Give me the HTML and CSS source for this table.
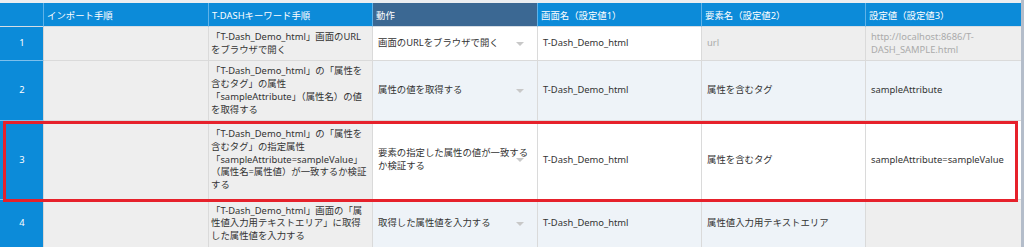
FILE: index.html
```html
<!DOCTYPE html>
<html lang="ja">
<head>
<meta charset="utf-8">
<title>T-DASH 手順</title>
<link rel="stylesheet" href="styles.css">
</head>
<body>
<div class="sheet">
  <table class="grid">
    <colgroup>
      <col class="c-num">
      <col class="c-import">
      <col class="c-kw">
      <col class="c-act">
      <col class="c-v1">
      <col class="c-v2">
      <col class="c-v3">
    </colgroup>
    <thead>
      <tr>
        <th class="num"></th>
        <th>インポート手順</th>
        <th>T-DASHキーワード手順</th>
        <th class="dark">動作</th>
        <th>画面名（設定値1）</th>
        <th>要素名（設定値2）</th>
        <th>設定値（設定値3）</th>
      </tr>
    </thead>
    <tbody>
      <tr class="r1">
        <td class="num">1</td>
        <td class="ro"></td>
        <td class="ro kw">「T-Dash_Demo_html」画面のURLをブラウザで開く</td>
        <td class="w sel">画面のURLをブラウザで開く</td>
        <td class="w">T-Dash_Demo_html</td>
        <td class="dis">url</td>
        <td class="dis">http://localhost:8686/T-DASH_SAMPLE.html</td>
      </tr>
      <tr class="r2">
        <td class="num">2</td>
        <td class="ro"></td>
        <td class="ro kw">「T-Dash_Demo_html」の「属性を含むタグ」の属性「sampleAttribute」（属性名）の値を取得する</td>
        <td class="b sel">属性の値を取得する</td>
        <td class="b">T-Dash_Demo_html</td>
        <td class="b">属性を含むタグ</td>
        <td class="b">sampleAttribute</td>
      </tr>
      <tr class="r3">
        <td class="num">3</td>
        <td class="ro"></td>
        <td class="ro kw">「T-Dash_Demo_html」の「属性を含むタグ」の指定属性「sampleAttribute=sampleValue」（属性名=属性値）が一致するか検証する</td>
        <td class="w sel">要素の指定した属性の値が一致するか検証する</td>
        <td class="w">T-Dash_Demo_html</td>
        <td class="w">属性を含むタグ</td>
        <td class="w">sampleAttribute=sampleValue</td>
      </tr>
      <tr class="r4">
        <td class="num">4</td>
        <td class="ro"></td>
        <td class="ro kw">「T-Dash_Demo_html」画面の「属性値入力用テキストエリア」に取得した属性値を入力する</td>
        <td class="b sel">取得した属性値を入力する</td>
        <td class="b">T-Dash_Demo_html</td>
        <td class="b">属性値入力用テキストエリア</td>
        <td class="ro"></td>
      </tr>
    </tbody>
  </table>
  <div class="highlight"></div>
</div>
</body>
</html>
```

FILE: styles.css
```css
html, body {
  margin: 0;
  padding: 0;
}

body {
  font-family: "Noto Sans", "Noto Sans CJK JP", sans-serif;
  font-size: 9.4px;
  color: #333;
  background: #fff;
}

.sheet {
  position: relative;
  box-sizing: border-box;
  width: 1024px;
  height: 247px;
  overflow: hidden;
  padding-top: 3px;
  background: #eceef1;
  border-right: 3px solid #b4bdca;
}

.grid {
  border-collapse: separate;
  border-spacing: 0;
  table-layout: fixed;
  width: 1021px;
}

.c-num { width: 44px; }
.c-import { width: 165px; }
.c-kw { width: 164px; }
.c-act { width: 165px; }
.c-v1 { width: 164px; }
.c-v2 { width: 164px; }
.c-v3 { width: 155px; }

.grid th {
  box-sizing: border-box;
  height: 24px;
  padding: 0 3px;
  text-align: left;
  font-weight: normal;
  color: #fff;
  background: #0c8bd9;
  border-right: 1px solid #5fb2e8;
  border-bottom: 1px solid #d6dde4;
  white-space: nowrap;
  overflow: hidden;
}

.grid th.dark {
  background: #3b6893;
}

.grid th:last-child {
  border-right: none;
}

.grid td {
  padding: 4px 4px 4px 5px;
  line-height: 12.7px;
  vertical-align: middle;
  text-align: left;
  border-right: 1px solid #dadada;
  border-bottom: 1px solid #dadada;
  word-break: normal;
  overflow-wrap: normal;
}

.grid .r3 td {
  padding-top: 7px;
  padding-bottom: 7px;
}

.grid .r4 td {
  padding-top: 5px;
  padding-bottom: 5px;
}

.grid td:last-child {
  border-right: none;
}

.grid td.num {
  text-align: center;
  color: #fff;
  background: #0c8bd9;
  border-bottom-color: #7dbfec;
  border-right-color: #d6d6d6;
}

.grid td.kw {
  padding-left: 2px;
  padding-right: 4px;
}

.ro {
  background: #eeeeee;
}

.w {
  background: #ffffff;
}

.b {
  background: #eef3f8;
}

.dis {
  background: #eeeeee;
  color: #ababab;
}

.sel {
  position: relative;
}

.sel::after {
  content: "";
  position: absolute;
  right: 13px;
  top: 50%;
  margin-top: -2px;
  border-left: 4.5px solid transparent;
  border-right: 4.5px solid transparent;
  border-top: 4px solid #c8c8c8;
}

.highlight {
  position: absolute;
  left: 3px;
  top: 121px;
  width: 1015px;
  height: 81px;
  box-sizing: border-box;
  border: 3px solid #e6212b;
  pointer-events: none;
}
```
